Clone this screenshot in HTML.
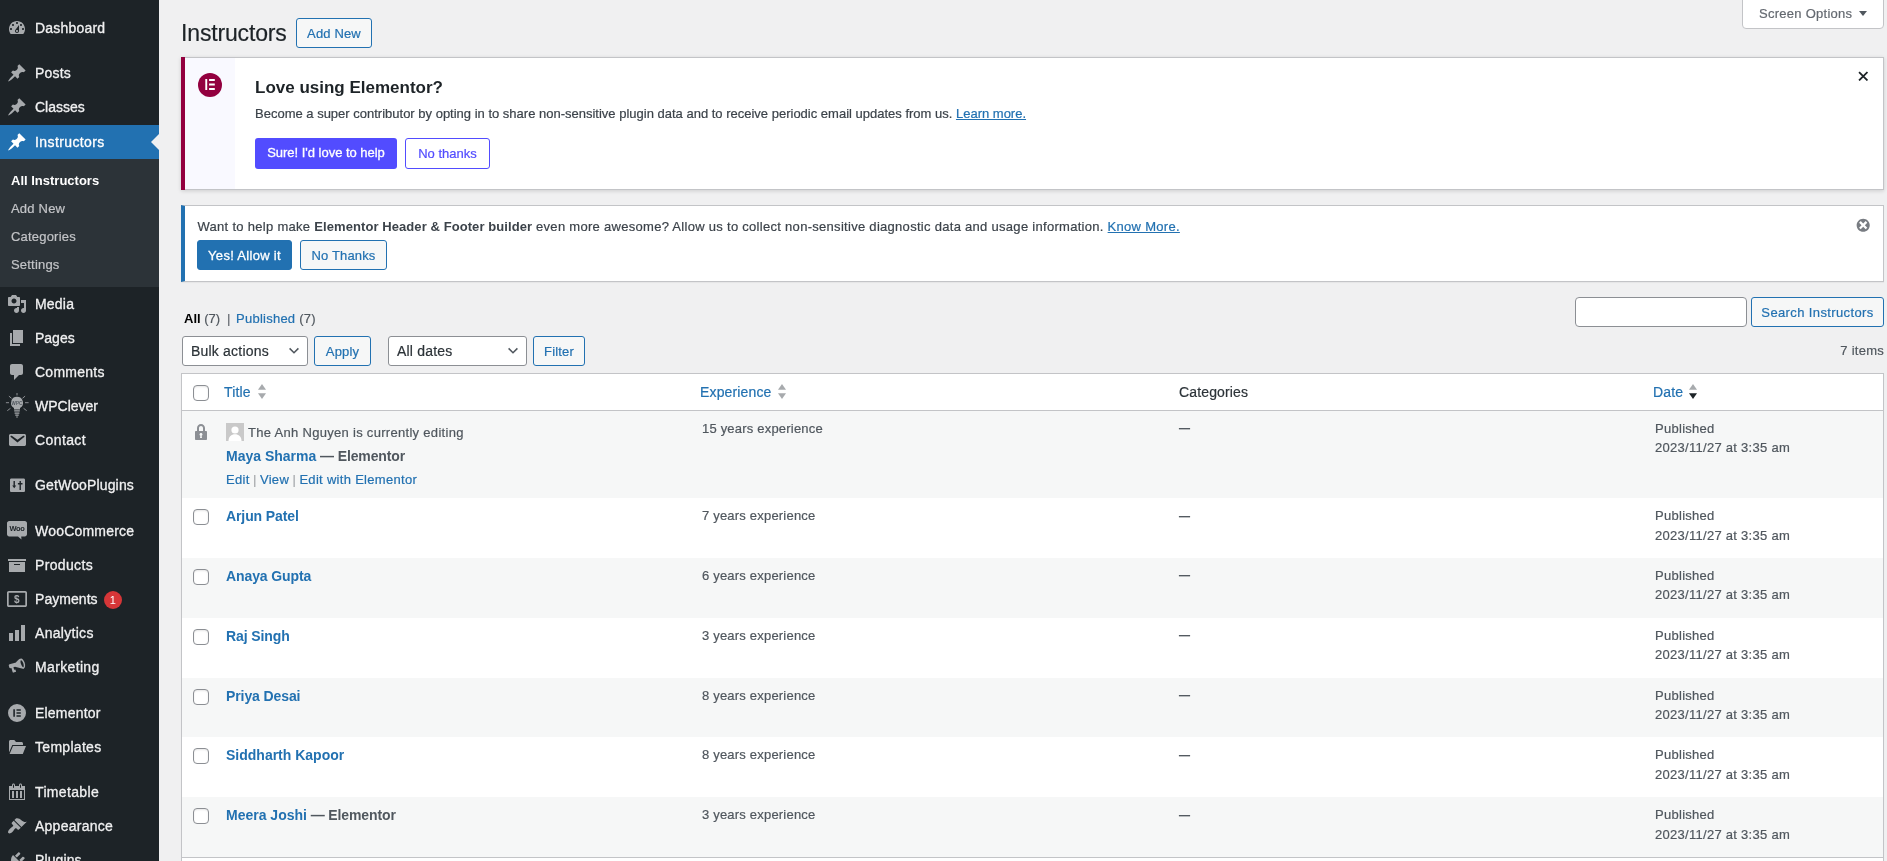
<!DOCTYPE html>
<html lang="en">
<head>
<meta charset="utf-8">
<title>Instructors</title>
<style>
*{box-sizing:border-box}
html,body{margin:0;padding:0}
body{width:1887px;height:861px;overflow:hidden;background:#f0f0f1;font-family:"Liberation Sans",Arial,sans-serif;font-size:13px;line-height:18px;color:#3c434a;position:relative;-webkit-text-stroke-width:.2px}
b,h3,.ttl,#sub a.on{-webkit-text-stroke-width:0}
a{color:#2271b1;text-decoration:none}
h1,h3,p{margin:0;padding:0}
/* sidebar */
#menu{position:absolute;left:0;top:0;width:159px;height:861px;background:#1d2327;overflow:hidden;will-change:transform}
#menu .it{position:absolute;left:0;width:159px;height:34px;color:#f0f0f1;font-size:14px;line-height:18px;letter-spacing:.2px}
#menu .it span{position:absolute;left:35px;top:8px;white-space:nowrap;-webkit-text-stroke-width:.3px}
#menu .it svg{position:absolute;left:7px;top:7px;width:20px;height:20px;fill:#a7aaad}
#menu .it svg.big{left:5px;top:2px;width:24px;height:28px}
#menu .cur{background:#2271b1;color:#fff}
#menu .cur svg{fill:#fff}
#menu .cur:after{content:"";position:absolute;right:0;top:9px;border:8px solid transparent;border-right-color:#f0f0f1}
#sub{position:absolute;left:0;top:159px;width:159px;height:128px;background:#2c3338}
#sub a{position:absolute;left:11px;margin-top:1px;font-size:13px;line-height:18px;color:#c3c4c7;white-space:nowrap;letter-spacing:.2px}
#sub a.on{color:#fff;font-weight:bold;letter-spacing:0}
.badge{position:absolute;left:104px;top:9px;width:18px;height:18px;border-radius:9px;background:#d63638;color:#fff;font-size:11px;line-height:18px;text-align:center;font-weight:normal}
/* content */
#content{position:absolute;left:0;top:0;width:1887px;height:861px;will-change:transform}
#content>*{position:absolute}
#scropt{left:1742px;top:-1px;width:142px;height:30px;background:#fff;border:1px solid #c3c4c7;border-radius:0 0 4px 4px;color:#646970;font-size:13px;line-height:28px;padding-left:16px;letter-spacing:.27px}
#scropt i{position:absolute;left:116px;top:11px;border:4.200px solid transparent;border-top:5.200px solid #50575e;border-bottom:0}
h1{left:181px;top:18px;font-size:23px;font-weight:400;line-height:30px;color:#1d2327;letter-spacing:-.15px}
.btn{display:block;height:30px;border:1px solid #2271b1;border-radius:3px;background:#f6f7f7;color:#2271b1;font-size:13px;line-height:28px;padding-top:1px;text-align:center;white-space:nowrap;letter-spacing:.15px}
.btn.pri{background:#2271b1;color:#fff;-webkit-text-stroke:.3px #fff;letter-spacing:.3px}
.addnew{left:296px;top:18px;width:76px}
#n1{left:181px;top:57px;width:1703px;height:133px;background:#fff;border:1px solid #c3c4c7;border-left:0;padding-left:4px;box-shadow:0 1px 4px rgba(0,0,0,.15)}
#n1:before{content:"";position:absolute;left:0;top:-1px;width:4px;height:133px;background:#93003f}
#n1>*{position:absolute}
#n1 .ico{left:4px;top:0;width:50px;height:131px;background:#f9f9ff}
#n1 .ico svg{position:absolute;left:13px;top:15px;width:24px;height:24px}
#n1 h3{left:74px;top:19px;font-size:17px;line-height:22px;font-weight:bold;color:#1d2327;white-space:nowrap}
#n1 p{left:74px;top:47px;font-size:13px;line-height:18px;color:#3c434a;white-space:nowrap}
#n1 p a,#n2 p a{text-decoration:underline}
.eb1{left:74px;top:80px;width:142px;height:31px;background:#524cff;border-radius:3px;color:#fff;font-size:13px;-webkit-text-stroke:.3px #fff;letter-spacing:-.02px;line-height:29px;text-align:center}
.eb2{left:224px;top:80px;width:85px;height:31px;background:#fff;border:1px solid #524cff;border-radius:3px;color:#524cff;font-size:13px;line-height:29px;text-align:center}
#n1 .x{left:1676.500px;top:12.500px;width:10.500px;height:10.500px}
#n2{left:181px;top:205px;width:1703px;height:77px;background:#fff;border:1px solid #c3c4c7;border-left:4px solid #2271b1;box-shadow:0 1px 1px rgba(0,0,0,.04)}
#n2>*{position:absolute}
#n2 p{left:12.500px;top:12px;white-space:nowrap;letter-spacing:.29px}
#n2 p b{color:#3c434a;letter-spacing:.08px}
#n2 .yes{left:12px;top:34px;width:95px}
#n2 .no{left:115px;top:34px;width:87px}
#n2 .dis{left:1669.500px;top:10.500px;width:16.400px;height:16.400px;fill:#787c82}
#views{left:184px;top:310px;white-space:nowrap;color:#646970;letter-spacing:0}
#views i{position:absolute;left:43px;top:0;font-style:normal}
#views em{position:absolute;left:52px;top:0;font-style:normal;letter-spacing:.25px}
#views b{color:#000}
#views span{color:#50575e}
#sinput{left:1575px;top:297px;width:172px;height:30px;background:#fff;border:1px solid #8c8f94;border-radius:4px}
.sbtn{left:1751px;top:297px;width:133px;letter-spacing:.38px}
.sel{left:182px;top:336px;height:30px;background:#fff;border:1px solid #8c8f94;border-radius:3px;font-size:14px;line-height:28px;color:#2c3338;padding-left:8px;letter-spacing:.2px}
.sel svg{position:absolute;right:7px;top:10px;width:12px;height:8px}
.s1{left:182px;width:126px}
.s2{left:388px;width:139px}
.apply{left:314px;top:336px;width:57px}
.filter{left:533px;top:336px;width:52px}
#count{left:1784px;top:342px;width:100px;text-align:right;color:#50575e;letter-spacing:.25px}
/* table */
#tbl{left:181px;top:373px;width:1703px;border:1px solid #c3c4c7;border-spacing:0;background:#fff;table-layout:fixed;box-shadow:0 1px 1px rgba(0,0,0,.04)}
#tbl th{height:37px;border-bottom:1px solid #c3c4c7;text-align:left;font-weight:400;font-size:14px;line-height:18px;padding:0 0 0 8px;color:#2c3338;vertical-align:middle;white-space:nowrap;letter-spacing:.15px}
#tbl th.c0,#tbl td.c0{padding:0;position:relative}
#tbl th.c3{padding-left:10px}
#tbl td.c3{font-size:11px;font-weight:bold;line-height:20px}
.cb{position:absolute;left:11px;top:11px;width:16px;height:16px;border:1px solid #8c8f94;border-radius:4px;background:#fff;box-shadow:inset 0 1px 2px rgba(0,0,0,.1)}
td .cb{top:11px}
.c1 .sort{margin-left:7.300px!important}
.sort{width:8px;height:15px;margin-left:6.100px;vertical-align:-2px}
.sort path{fill:#a7aaad}
.sorted .sort .d{fill:#1d2327}
#tbl td{vertical-align:top;padding:8px 10px;font-size:13px;line-height:19.5px;color:#50575e;height:60px;letter-spacing:.2px}
#tbl td.c4{letter-spacing:.28px}
#tbl tr.alt td{background:#f6f7f7}
#tbl tr.locked td{height:87px}
#tbl tr.h59 td{height:59px}
#tbl td.c1{padding-left:10px;padding-top:8px}
#tbl tr.locked td.c1{padding-top:12px;padding-bottom:0}
#tbl tr.locked td,#tbl tr.lh19 td{line-height:19px}
.ttl{font-size:14px;font-weight:bold;line-height:20px;color:#50575e;letter-spacing:0;white-space:nowrap}
.lock{position:absolute;left:9px;top:11px;width:20px;height:20px;fill:#8c8f94}
.lockinfo{height:23px;white-space:nowrap;letter-spacing:.3px;color:#50575e}
.lockinfo .ava{width:18px;height:18px;vertical-align:-4px;margin-right:4px}
.acts{font-size:13px;line-height:20px;color:#a7aaad;white-space:nowrap;margin-top:4px;padding-bottom:1px;letter-spacing:-.1px}
.acts a{letter-spacing:.3px}
.ttl span{letter-spacing:-.12px}
#tbl tfoot th{border-bottom:0;border-top:1px solid #c3c4c7}

</style>
</head>
<body>
<div id="menu">
<div class="it " style="top:11px"><svg viewBox="0 0 20 20"><path d="M3.76 16h12.48c1.1-1.37 1.76-3.11 1.76-5 0-4.42-3.58-8-8-8s-8 3.58-8 8c0 1.89.66 3.63 1.76 5zM10 4c.55 0 1 .45 1 1s-.45 1-1 1-1-.45-1-1 .45-1 1-1zM6 6c.55 0 1 .45 1 1s-.45 1-1 1-1-.45-1-1 .45-1 1-1zm8 0c.55 0 1 .45 1 1s-.45 1-1 1-1-.45-1-1 .45-1 1-1zm-5.370 5.550L12 7v6c0 1.100-.900 2-2 2s-2-.900-2-2c0-.570.240-1.080.630-1.450zM4 10c.55 0 1 .45 1 1s-.45 1-1 1-1-.45-1-1 .45-1 1-1zm12 0c.55 0 1 .45 1 1s-.45 1-1 1-1-.45-1-1 .45-1 1-1zm-5 3c0-.55-.45-1-1-1s-1 .45-1 1 .45 1 1 1 1-.45 1-1z"/></svg><span>Dashboard</span></div>
<div class="it " style="top:56px"><svg viewBox="0 0 20 20"><path d="M10.44 3.02l1.82-1.820 6.360 6.350-1.830 1.820c-1.050-.680-2.480-.570-3.410.360l-.750.750c-.920.930-1.040 2.350-.350 3.410l-1.830 1.820-2.410-2.410-2.800 2.790c-.420.420-3.380 2.710-3.800 2.290s1.860-3.390 2.280-3.810l2.790-2.790L4.100 9.360l1.830-1.820c1.050.690 2.480.570 3.400-.360l.750-.750c.930-.920 1.050-2.350.360-3.410z"/></svg><span>Posts</span></div>
<div class="it " style="top:90px"><svg viewBox="0 0 20 20"><path d="M10.44 3.02l1.82-1.820 6.360 6.350-1.830 1.820c-1.050-.680-2.480-.570-3.410.360l-.750.750c-.920.930-1.040 2.350-.350 3.410l-1.830 1.820-2.410-2.410-2.800 2.790c-.420.420-3.380 2.710-3.800 2.290s1.860-3.390 2.280-3.810l2.790-2.790L4.100 9.360l1.830-1.820c1.050.690 2.480.570 3.400-.360l.750-.750c.930-.920 1.050-2.350.360-3.410z"/></svg><span style="letter-spacing:0px">Classes</span></div>
<div class="it cur" style="top:125px"><svg viewBox="0 0 20 20"><path d="M10.44 3.02l1.82-1.820 6.360 6.350-1.830 1.820c-1.050-.680-2.480-.570-3.410.360l-.750.750c-.920.930-1.040 2.350-.350 3.410l-1.830 1.820-2.410-2.410-2.800 2.790c-.420.420-3.380 2.710-3.800 2.290s1.860-3.390 2.280-3.810l2.790-2.790L4.100 9.360l1.830-1.820c1.050.690 2.480.570 3.400-.360l.750-.750c.930-.920 1.050-2.350.360-3.410z"/></svg><span style="letter-spacing:0.4px">Instructors</span></div>
<div class="it " style="top:287px"><svg viewBox="0 0 20 20"><path d="M13 11V4c0-.55-.45-1-1-1h-1.670L9 1H5L3.670 3H2c-.55 0-1 .45-1 1v7c0 .55.45 1 1 1h10c.55 0 1-.45 1-1zM7 4.500c1.380 0 2.500 1.120 2.500 2.500S8.380 9.500 7 9.500 4.500 8.380 4.500 7 5.620 4.500 7 4.500zM14 6h5v10.500c0 1.380-1.120 2.500-2.500 2.500S14 17.880 14 16.500s1.120-2.500 2.500-2.500c.170 0 .340.020.500.050V9h-3V6zm-4 8.050V13h2v3.500c0 1.380-1.120 2.500-2.500 2.500S7 17.880 7 16.500 8.120 14 9.500 14c.170 0 .340.020.500.050z"/></svg><span>Media</span></div>
<div class="it " style="top:321px"><svg viewBox="0 0 20 20"><path d="M6 15V2h10v13H6zm-1 1h8v2H3V5h2v11z"/></svg><span style="letter-spacing:0px">Pages</span></div>
<div class="it " style="top:355px"><svg viewBox="0 0 20 20"><path d="M5 2h9c1.100 0 2 .900 2 2v7c0 1.100-.900 2-2 2h-2l-5 5v-5H5c-1.100 0-2-.900-2-2V4c0-1.100.900-2 2-2z"/></svg><span style="letter-spacing:0.25px">Comments</span></div>
<div class="it " style="top:389px"><svg class="big" viewBox="0 0 24 28"><path d="M12 5.700a6 6 0 0 0-3 11.200v1.600h6v-1.600A6 6 0 0 0 12 5.700zM9.200 19.300h5.600v1.300H9.200zm.400 2.100h4.800v1.300H9.600zm.700 2.100h3.400v1.300h-3.400zm.900 2.100h1.600v1h-1.600z"/><path d="M12 2v2.400M3.900 5.100l2.600 2.200M20.100 5.100l-2.600 2.200M.900 11.700H4M20 11.700h3.600M2.300 19.700l3.150-2.400M21.700 19.700l-3.150-2.400" stroke="#a7aaad" stroke-width=".800" fill="none"/><text x="12" y="13.500" text-anchor="middle" font-family="Liberation Sans,sans-serif" font-size="4.500" font-weight="700" fill="#50575e">WPC</text></svg><span style="letter-spacing:0px">WPClever</span></div>
<div class="it " style="top:423px"><svg viewBox="0 0 20 20"><path d="M3.870 4h13.250C18.370 4 19 4.590 19 5.790v8.420c0 1.190-.630 1.790-1.880 1.790H3.870c-1.250 0-1.880-.600-1.880-1.790V5.790c0-1.200.630-1.790 1.880-1.790zm6.620 8.600l6.740-5.530c.240-.200.430-.660.130-1.070-.290-.410-.820-.420-1.170-.170l-5.700 3.860L4.800 5.830c-.350-.250-.880-.240-1.170.170-.300.410-.110.870.130 1.070l6.730 5.530z"/></svg><span style="letter-spacing:0.4px">Contact</span></div>
<div class="it " style="top:468px"><svg viewBox="0 0 20 20"><path fill-rule="evenodd" d="M4.300 3.500h12.400c.700 0 1.300.600 1.300 1.300v11c0 .700-.600 1.300-1.300 1.300H4.300c-.700 0-1.300-.600-1.300-1.300v-11c0-.700.600-1.300 1.300-1.300zM6.500 6v4.500H5.200l2 2.700 2-2.700H7.900V6zm6 0v2H10.900v1.400h1.600V15h1.400V9.400h1.600V8h-1.600V6z"/></svg><span style="letter-spacing:0.15px">GetWooPlugins</span></div>
<div class="it " style="top:514px"><svg style="top:6px" viewBox="0 0 20 20"><path d="M2.200 1h15.600C19 1 20 2 20 3.200v11.100c0 1.200-1 2.200-2.200 2.200h-3.600l.3 3-3.500-3H2.200C1 16.500 0 15.500 0 14.300V3.200C0 2 1 1 2.200 1z"/><text x="10" y="11.200" text-anchor="middle" font-family="Liberation Sans,sans-serif" font-size="7.500" font-weight="700" fill="#1d2327" letter-spacing="-.3">Woo</text></svg><span>WooCommerce</span></div>
<div class="it " style="top:548px"><svg viewBox="0 0 20 20"><path d="M19 4v2H1V4h18zM2 7h16v10H2V7zm11 3V9H7v1h6z"/></svg><span style="letter-spacing:0.35px">Products</span></div>
<div class="it " style="top:582px"><svg viewBox="0 0 20 20"><path fill-rule="evenodd" d="M1.800 2h16.400c1 0 1.800.800 1.800 1.800v12.400c0 1-.800 1.800-1.800 1.800H1.800C.800 18 0 17.200 0 16.200V3.800C0 2.800.800 2 1.800 2zm-.100 1.700v12.600h16.600V3.700z"/><text x="10" y="13.600" text-anchor="middle" font-family="Liberation Sans,sans-serif" font-size="10" font-weight="700">$</text></svg><span style="letter-spacing:0.05px">Payments</span><b class="badge">1</b></div>
<div class="it " style="top:616px"><svg viewBox="0 0 20 20"><path d="M18 18V2h-4v16h4zm-6 0V7H8v11h4zm-6 0v-8H2v8h4z"/></svg><span style="letter-spacing:0.3px">Analytics</span></div>
<div class="it " style="top:650px"><svg viewBox="0 0 20 20"><path d="M17.6 5.600c1 2.700.600 5.600-.900 6.200-.300.100-.600.100-.900 0L8 9.700l-1.600.500.800 2.600 1.200-.300.700 2.300-2.600.800c-.400.100-.800-.100-.900-.500L4.400 11l-.700.200c-.600.200-1.200-.200-1.400-.800l-.500-1.800c-.200-.600.200-1.200.800-1.400L9 5.400s3-4 5.100-3.900c1.300.100 2.700 1.700 3.500 4.100zm-1.300 4.700c.500-.200.700-2.100 0-4.100-.700-1.900-1.900-3.200-2.400-3-.500.200-.600 2 .100 3.900.700 2 1.800 3.400 2.300 3.200z"/></svg><span style="letter-spacing:0.35px">Marketing</span></div>
<div class="it " style="top:696px"><svg viewBox="0 0 20 20"><path fill-rule="evenodd" d="M10 1a9 9 0 1 0 0 18 9 9 0 0 0 0-18zM6.300 6.200h1.600v7.600H6.300zm3.200 0h4.300v1.500H9.500zm0 3.050h4.300v1.500H9.500zm0 3.050h4.300v1.500H9.500z"/></svg><span>Elementor</span></div>
<div class="it " style="top:730px"><svg viewBox="0 0 20 20"><path d="M2 4.500C2 3.700 2.700 3 3.500 3h3.800l1.700 2h5.500c.800 0 1.500.700 1.500 1.500V8H5.300L2 15.500zM6 9h13l-3.200 8H2.600z"/></svg><span style="letter-spacing:0.3px">Templates</span></div>
<div class="it " style="top:775px"><svg viewBox="0 0 20 20"><path d="M15 4h3v14H2V4h3V3c0-.83.67-1.500 1.500-1.500S8 2.170 8 3v1h4V3c0-.83.67-1.500 1.500-1.500S15 2.170 15 3v1zM6 3v2.500c0 .28.220.500.500.500s.500-.220.500-.500V3c0-.28-.220-.500-.500-.500S6 2.720 6 3zm7 0v2.500c0 .28.220.500.500.500s.500-.220.500-.500V3c0-.28-.220-.500-.500-.500s-.500.220-.500.500zm4 14V8H3v9h14zM7 16V9H5v7h2zm4 0V9H9v7h2zm4 0V9h-2v7h2z"/></svg><span style="letter-spacing:0.35px">Timetable</span></div>
<div class="it " style="top:809px"><svg viewBox="0 0 20 20"><path d="M14.480 11.060L7.410 3.990l1.500-1.500c.500-.560 2.300-.470 3.510.320 1.210.800 1.430 1.280 2.910 2.100 1.180.640 2.450 1.260 4.450.850zm-.710.710L6.700 4.700 4.930 6.470c-.390.390-.390 1.020 0 1.410l1.060 1.060c.390.390.390 1.030 0 1.420-.600.600-1.430 1.110-2.210 1.690-.350.260-.700.530-1.010.840C1.430 14.230.400 16.080 1.400 17.070c.990 1 2.840-.030 4.180-1.360.310-.310.580-.660.850-1.020.570-.780 1.080-1.610 1.690-2.210.390-.390 1.020-.390 1.410 0l1.060 1.060c.390.390 1.020.390 1.410 0z"/></svg><span style="letter-spacing:0.25px">Appearance</span></div>
<div class="it " style="top:843px"><svg viewBox="0 0 20 20"><path d="M13.110 4.360L9.870 7.600 8 5.730l3.240-3.240c.350-.340 1.050-.200 1.560.320.520.510.660 1.210.310 1.550zm-8 1.770l.910-1.120 9.010 9.010-1.190.840c-.710.710-2.630 1.160-3.820 1.160H6.140L4.900 17.260c-.590.590-1.540.590-2.120 0-.590-.580-.590-1.530 0-2.120l1.240-1.240v-3.880c0-1.130.400-3.190 1.090-3.890zm7.260 3.970l3.240-3.240c.340-.350 1.040-.210 1.550.310.520.510.660 1.210.310 1.550l-3.240 3.250z"/></svg><span style="letter-spacing:0.1px">Plugins</span></div>
<div id="sub"><a class="on" style="top:12px">All Instructors</a><a style="top:40px">Add New</a><a style="top:68px">Categories</a><a style="top:96px">Settings</a></div>
</div>
<div id="content">

<div id="scropt">Screen Options <i></i></div>
<h1>Instructors</h1><a class="btn addnew">Add New</a>
<div id="n1">
 <div class="ico"><svg viewBox="0 0 24 24"><circle cx="12" cy="12" r="12" fill="#93003f"/><path d="M7.300 5.900h1.900v11.200H7.300zM11.100 5.900h5.700v2.200h-5.700zM11.100 10.400h5.700v2.200h-5.700zM11.100 14.900h5.700v2.200h-5.700z" fill="#fff"/></svg></div>
 <h3>Love using Elementor?</h3>
 <p>Become a super contributor by opting in to share non-sensitive plugin data and to receive periodic email updates from us. <a>Learn more.</a></p>
 <a class="eb1">Sure! I'd love to help</a><a class="eb2">No thanks</a>
 <svg class="x" viewBox="0 0 10 10"><path d="M1 1l8 8M9 1l-8 8" stroke="#1d2327" stroke-width="1.700" fill="none"/></svg>
</div>
<div id="n2">
 <p>Want to help make <b>Elementor Header &amp; Footer builder</b> even more awesome? Allow us to collect non-sensitive diagnostic data and usage information. <a>Know More.</a></p>
 <a class="btn pri yes">Yes! Allow it</a><a class="btn no">No Thanks</a>
 <svg class="dis" viewBox="0 0 20 20"><path d="M10 2c4.420 0 8 3.580 8 8s-3.580 8-8 8-8-3.580-8-8 3.580-8 8-8zm5 11l-3-3 3-3-2-2-3 3-3-3-2 2 3 3-3 3 2 2 3-3 3 3z"/></svg>
</div>
<div id="views"><b>All</b> <span>(7)</span><i>|</i><em><a>Published</a> <span>(7)</span></em></div>
<div id="sinput"></div><a class="btn sbtn">Search Instructors</a>
<div class="sel s1">Bulk actions<svg viewBox="0 0 12 8"><path d="M1.600 1.400L6 5.800l4.400-4.400" fill="none" stroke="#50575e" stroke-width="1.500"/></svg></div><a class="btn apply">Apply</a>
<div class="sel s2">All dates<svg viewBox="0 0 12 8"><path d="M1.600 1.400L6 5.800l4.400-4.400" fill="none" stroke="#50575e" stroke-width="1.500"/></svg></div><a class="btn filter">Filter</a>
<div id="count">7 items</div>
<table id="tbl">
<colgroup><col style="width:34px"><col style="width:476px"><col style="width:477px"><col style="width:476px"><col></colgroup>
<thead><tr><th class="c0"><i class="cb"></i></th><th class="c1"><a>Title</a><svg class="sort" viewBox="0 0 8 15"><path class="u" d="M4 0l4 5.800H0z"/><path class="d" d="M4 15L0 9.200h8z"/></svg></th><th class="c2"><a>Experience</a><svg class="sort" viewBox="0 0 8 15"><path class="u" d="M4 0l4 5.800H0z"/><path class="d" d="M4 15L0 9.200h8z"/></svg></th><th class="c3">Categories</th><th class="c4 sorted"><a>Date</a><svg class="sort" viewBox="0 0 8 15"><path class="u" d="M4 0l4 5.800H0z"/><path class="d" d="M4 15L0 9.200h8z"/></svg></th></tr></thead>
<tbody>
<tr class="alt locked"><td class="c0"><svg class="lock" viewBox="0 0 20 20"><path d="M14 9h1c.55 0 1 .45 1 1v7c0 .55-.45 1-1 1H5c-.55 0-1-.45-1-1v-7c0-.55.45-1 1-1h1V6c0-2.210 1.790-4 4-4s4 1.790 4 4v3zm-2 0V6c0-1.100-.900-2-2-2s-2 .900-2 2v3h4zm-1 7l-.360-2.150c.510-.240.860-.750.860-1.350 0-.830-.670-1.500-1.500-1.500s-1.500.670-1.500 1.500c0 .600.350 1.110.860 1.350L9 16h2z"/></svg></td><td class="c1"><div class="lockinfo"><svg class="ava" viewBox="0 0 18 18"><rect width="18" height="18" fill="#c9c9c9"/><circle cx="9" cy="7" r="3.600" fill="#fff"/><path d="M2.500 18c0-4.500 2.800-6.800 6.500-6.800s6.500 2.300 6.500 6.800z" fill="#fff"/></svg><span>The Anh Nguyen is currently editing</span></div><div class="ttl"><a>Maya Sharma</a><span> — Elementor</span></div><div class="acts"><a>Edit</a> | <a>View</a> | <a>Edit with Elementor</a></div></td><td class="c2">15 years experience</td><td class="c3">—</td><td class="c4">Published<br>2023/11/27 at 3:35 am</td></tr>
<tr class=""><td class="c0"><i class="cb"></i></td><td class="c1"><div class="ttl"><a style="letter-spacing:-.1px">Arjun Patel</a><span></span></div></td><td class="c2">7 years experience</td><td class="c3">—</td><td class="c4">Published<br>2023/11/27 at 3:35 am</td></tr>
<tr class="alt lh19"><td class="c0"><i class="cb"></i></td><td class="c1"><div class="ttl"><a style="letter-spacing:-.1px">Anaya Gupta</a><span></span></div></td><td class="c2">6 years experience</td><td class="c3">—</td><td class="c4">Published<br>2023/11/27 at 3:35 am</td></tr>
<tr class="lh19"><td class="c0"><i class="cb"></i></td><td class="c1"><div class="ttl"><a style="letter-spacing:-.1px">Raj Singh</a><span></span></div></td><td class="c2">3 years experience</td><td class="c3">—</td><td class="c4">Published<br>2023/11/27 at 3:35 am</td></tr>
<tr class="alt h59 lh19"><td class="c0"><i class="cb"></i></td><td class="c1"><div class="ttl"><a style="letter-spacing:-.1px">Priya Desai</a><span></span></div></td><td class="c2">8 years experience</td><td class="c3">—</td><td class="c4">Published<br>2023/11/27 at 3:35 am</td></tr>
<tr class=""><td class="c0"><i class="cb"></i></td><td class="c1"><div class="ttl"><a>Siddharth Kapoor</a><span></span></div></td><td class="c2">8 years experience</td><td class="c3">—</td><td class="c4">Published<br>2023/11/27 at 3:35 am</td></tr>
<tr class="alt"><td class="c0"><i class="cb"></i></td><td class="c1"><div class="ttl"><a>Meera Joshi</a><span> — Elementor</span></div></td><td class="c2">3 years experience</td><td class="c3">—</td><td class="c4">Published<br>2023/11/27 at 3:35 am</td></tr>
</tbody>
<tfoot><tr><th class="c0"><i class="cb"></i></th><th class="c1"><a>Title</a><svg class="sort" viewBox="0 0 8 15"><path class="u" d="M4 0l4 5.800H0z"/><path class="d" d="M4 15L0 9.200h8z"/></svg></th><th class="c2"><a>Experience</a><svg class="sort" viewBox="0 0 8 15"><path class="u" d="M4 0l4 5.800H0z"/><path class="d" d="M4 15L0 9.200h8z"/></svg></th><th class="c3">Categories</th><th class="c4 sorted"><a>Date</a><svg class="sort" viewBox="0 0 8 15"><path class="u" d="M4 0l4 5.800H0z"/><path class="d" d="M4 15L0 9.200h8z"/></svg></th></tr></tfoot>
</table>

</div>
</body>
</html>
